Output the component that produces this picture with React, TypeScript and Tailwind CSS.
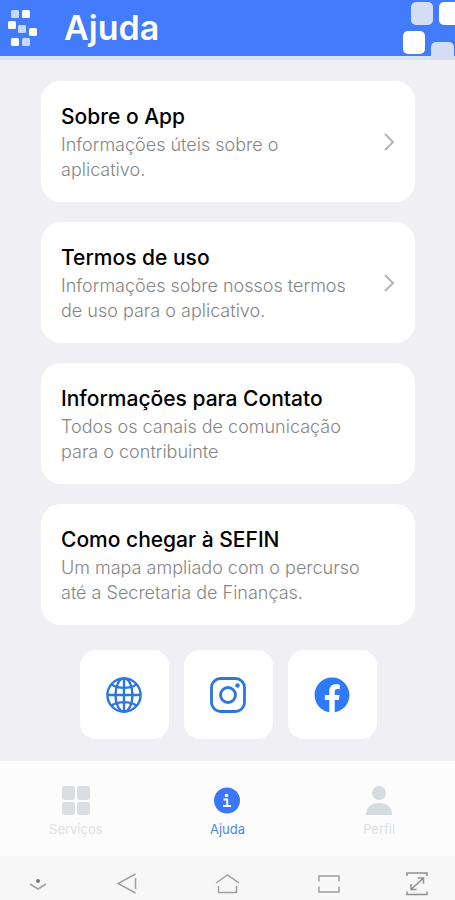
import { FaFacebook } from 'react-icons/fa';

const cards = [
  { title: 'Sobre o App', text: 'Informações úteis sobre o aplicativo.', arrow: true },
  { title: 'Termos de uso', text: 'Informações sobre nossos termos de uso para o aplicativo.', arrow: true },
  { title: 'Informações para Contato', text: 'Todos os canais de comunicação para o contribuinte', arrow: false },
  { title: 'Como chegar à SEFIN', text: 'Um mapa ampliado com o percurso até a Secretaria de Finanças.', arrow: false },
];

function Logo() {
  return (
    <svg width="30" height="38" viewBox="0 0 30 38" aria-hidden="true">
      <g fill="#fff">
        <rect x="14" y="1" width="8" height="8" rx="1.5" />
        <rect x="0" y="12" width="8" height="8" rx="1.5" />
        <rect x="21" y="19" width="8" height="8" rx="1.5" />
        <rect x="3" y="29" width="8" height="8" rx="1.5" />
      </g>
      <g fill="#c9d9fb">
        <rect x="3" y="1" width="8" height="8" rx="1.5" />
        <rect x="10" y="16" width="8" height="8" rx="1.5" />
        <rect x="14" y="29" width="8" height="8" rx="1.5" />
      </g>
    </svg>
  );
}

function HeaderSquares() {
  return (
    <svg className="absolute right-0 top-0" width="55" height="60" viewBox="0 0 55 60" aria-hidden="true">
      <rect x="11" y="2" width="22" height="23" rx="5" fill="#d3ddf3" />
      <rect x="39" y="2" width="22" height="23" rx="5" fill="#fff" />
      <rect x="3" y="31" width="22" height="23" rx="5" fill="#fff" />
      <rect x="31" y="42" width="23" height="23" rx="5" fill="#d3ddf3" />
    </svg>
  );
}

function Chevron() {
  return (
    <svg className="shrink-0" width="12" height="20" viewBox="0 0 12 20" fill="none" stroke="#b4b4b4" strokeWidth="2" aria-hidden="true">
      <path d="M2 2l8 8-8 8" />
    </svg>
  );
}

function Globe() {
  return (
    <svg width="36" height="36" viewBox="0 0 36 36" fill="none" stroke="#2b76e0" strokeWidth="2.4" aria-hidden="true">
      <circle cx="18" cy="18" r="16.6" />
      <ellipse cx="18" cy="18" rx="8.5" ry="16.6" />
      <path d="M18 1v34M1 18h34M5.5 7.5c7 4.500 18 4.500 25 0M5.500 28.500c7-4.500 18-4.500 25 0" />
    </svg>
  );
}

function Instagram() {
  return (
    <svg width="36" height="36" viewBox="0 0 36 36" fill="none" stroke="#2b76e0" strokeWidth="2.8" aria-hidden="true">
      <rect x="1.5" y="1.5" width="33" height="33" rx="9" />
      <circle cx="18" cy="18" r="7.5" />
      <circle cx="27.5" cy="8.5" r="2.200" fill="#2b76e0" stroke="none" />
    </svg>
  );
}

export default function App() {
  return (
    <div className="min-h-screen flex flex-col bg-[#efeff4] font-[Inter,'Noto_Sans',sans-serif]">

      {/* Header */}
      <header className="relative h-15 shrink-0 flex items-center gap-[26px] px-2 bg-[#427bfc] border-b-4 border-[#d9e3f7]">
        <Logo />
        <h1 className="text-[34px] leading-10 font-semibold text-white">Ajuda</h1>
        <HeaderSquares />
      </header>

      {/* Cards */}
      <main className="flex-1 pl-[41px] pr-10 pt-[21px] pb-[22px]">
        <div className="flex flex-col gap-5">
          {cards.map((card) => (
            <a key={card.title} href="#" className="flex items-center justify-between rounded-[20px] bg-white p-5">
              <div className="max-w-[304px]">
                <h2 className="text-[21px] leading-[31px] font-medium text-black">{card.title}</h2>
                <p className="text-lg leading-[25px] font-light text-[#858585]">{card.text}</p>
              </div>
              {card.arrow && <Chevron />}
            </a>
          ))}
        </div>

        {/* Social links */}
        <div className="mt-[25px] flex justify-center gap-[15px]">
          <a href="#" aria-label="Site" className="size-[89px] flex items-center justify-center rounded-2xl bg-white">
            <Globe />
          </a>
          <a href="#" aria-label="Instagram" className="size-[89px] flex items-center justify-center rounded-2xl bg-white">
            <Instagram />
          </a>
          <a href="#" aria-label="Facebook" className="size-[89px] flex items-center justify-center rounded-2xl bg-white">
            <FaFacebook size={36} color="#2f7af8" />
          </a>
        </div>
      </main>

      {/* Tab bar */}
      <nav className="grid grid-cols-3 bg-[#fcfcfc] pt-6 pb-[19px] text-[13px] leading-4">
        <button className="flex flex-col items-center gap-[5px] text-[#dde1e3]">
          <svg width="30" height="31" viewBox="0 0 30 31" fill="#d9dee1" aria-hidden="true">
            <rect x="1" y="1" width="13" height="14" rx="3" />
            <rect x="16" y="1" width="13" height="14" rx="3" />
            <rect x="1" y="17" width="13" height="13" rx="3" />
            <rect x="16" y="17" width="13" height="13" rx="3" />
          </svg>
          Serviços
        </button>
        <button className="flex flex-col items-center gap-[5px] text-[#5086e0]">
          <svg width="30" height="31" viewBox="0 0 30 31" aria-hidden="true">
            <circle cx="15" cy="15.5" r="13" fill="#3a78f5" />
            <circle cx="14.5" cy="10.5" r="1.8" fill="#fff" />
            <path d="M11.5 14.500h3.700v6M11 21h8" fill="none" stroke="#fff" strokeWidth="2" />
          </svg>
          Ajuda
        </button>
        <button className="flex flex-col items-center gap-[5px] text-[#dde1e3]">
          <svg width="30" height="31" viewBox="0 0 30 31" fill="#d5dcdf" aria-hidden="true">
            <circle cx="15" cy="8" r="7" />
            <path d="M2 30c0-8 5-12 13-12s13 4 13 12z" />
          </svg>
          Perfil
        </button>
      </nav>

      {/* System buttons */}
      <div className="h-11 shrink-0 grid grid-cols-[3fr_4fr_4fr_4fr_3fr] items-center justify-items-center bg-[#f7f7f7] pt-3">
        <button aria-label="Ocultar barra">
          <svg width="26" height="24" viewBox="0 0 26 24" fill="none" stroke="#a0a0a0" strokeWidth="1.5">
            <path d="M5 12l8 5 8-5" />
            <circle cx="13" cy="9" r="2" fill="#777" stroke="none" />
          </svg>
        </button>
        <button aria-label="Voltar">
          <svg width="26" height="24" viewBox="0 0 26 24" fill="none" stroke="#a0a0a0" strokeWidth="1.5">
            <path d="M22.5 2L5 11.500l17.500 9.500M22.500 6v11" />
          </svg>
        </button>
        <button aria-label="Início">
          <svg width="26" height="24" viewBox="0 0 26 24" fill="none" stroke="#a0a0a0" strokeWidth="1.5">
            <path d="M2 11L13.500 3l11.500 8M4.500 14v6.500h18V14" />
          </svg>
        </button>
        <button aria-label="Recentes">
          <svg width="26" height="24" viewBox="0 0 26 24" fill="none" stroke="#a0a0a0" strokeWidth="1.5">
            <path d="M3 9.500V4h20v5.500M3 14.500v5.500h20v-5.500" />
          </svg>
        </button>
        <button aria-label="Tela cheia">
          <svg width="26" height="24" viewBox="0 0 26 24" fill="none" stroke="#909090" strokeWidth="1.5">
            <path d="M3 4V1h20v3M3 19.500v3h20v-3M7 17.500L19.500 6M14 6h5.500v5.500M7 12v5.500h5.500" />
          </svg>
        </button>
      </div>

    </div>
  );
}
